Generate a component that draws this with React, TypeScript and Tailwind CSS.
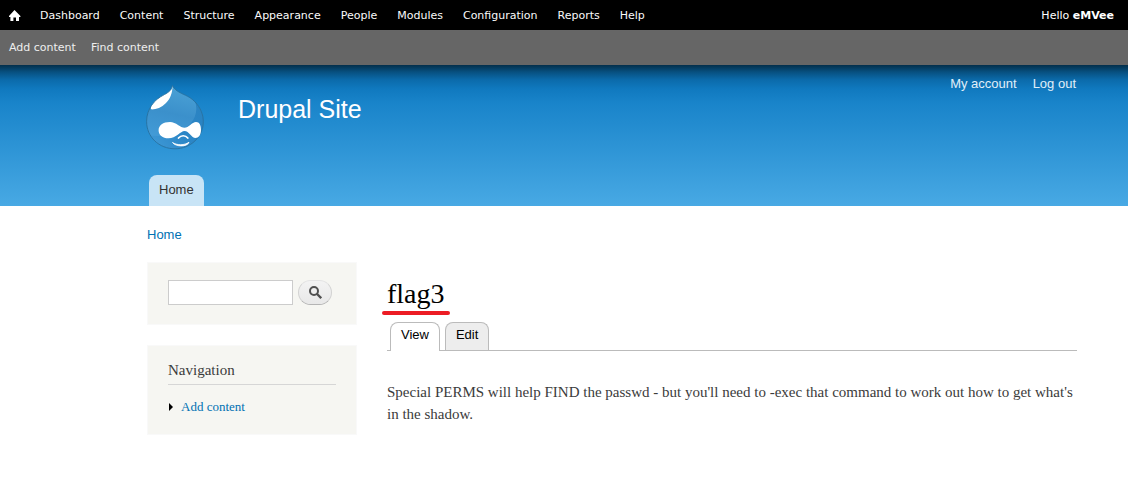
const toolbarLinks = [
  'Dashboard',
  'Content',
  'Structure',
  'Appearance',
  'People',
  'Modules',
  'Configuration',
  'Reports',
  'Help',
];

function HomeIcon() {
  return (
    <svg width="12" height="11" viewBox="0 0 12 11" fill="#fff" aria-hidden="true">
      <path d="M5.5 0 L11.4 6 V7 H10 V11 H7 V7.4 H4.4 V11 H1.4 V7 H0 V6 Z" />
    </svg>
  );
}

function Toolbar() {
  return (
    <nav aria-label="Administration" className="font-['DejaVu_Sans',sans-serif] text-[11px] leading-5 text-white">
      <div className="flex h-[30px] items-center bg-black pt-px pr-[14px] pl-[9px]">
        <a href="#home" aria-label="Home" className="mr-[19px] pb-px">
          <HomeIcon />
        </a>
        <ul className="flex flex-1 gap-5 text-[#fafafa]">
          {toolbarLinks.map((label) => (
            <li key={label}>
              <a href="#admin">{label}</a>
            </li>
          ))}
        </ul>
        <a href="#user">
          Hello <strong>eMVee</strong>
        </a>
      </div>
      <div className="flex h-[35px] items-center gap-[15px] bg-[#666] px-[9px] text-[#eee]">
        <a href="#add">Add content</a>
        <a href="#find">Find content</a>
      </div>
    </nav>
  );
}

const dropOutline =
  'M26.4 0.4 C28 4 31 6.2 35.7 8.5 C41 11 45.5 12.7 50 18 C54 22.5 57.3 29 57.3 36.5 C57.3 52 44.5 63.8 29 63.8 C13 63.8 0.6 52 0.6 36.5 C0.6 30 2.5 25 5.5 20.5 C9 15.2 13 12.5 18.5 9.5 C23 7 25.8 5 26.4 0.4 Z';

function DropLogo() {
  return (
    <svg width="58" height="65" viewBox="0 0 58 65" role="img" aria-label="Drupal logo">
      <defs>
        <linearGradient id="drop" x1="0.6" y1="0" x2="0.4" y2="1">
          <stop offset="0" stopColor="#4ba2d6" />
          <stop offset="0.45" stopColor="#3b90cb" />
          <stop offset="1" stopColor="#459fdb" />
        </linearGradient>
        <linearGradient id="shade" x1="1" y1="0.2" x2="0" y2="0.8">
          <stop offset="0" stopColor="#2a83c2" />
          <stop offset="0.5" stopColor="#2c87c7" />
          <stop offset="1" stopColor="#3f99d6" />
        </linearGradient>
        <clipPath id="outline">
          <path d={dropOutline} />
        </clipPath>
      </defs>
      <g clipPath="url(#outline)">
        <rect width="58" height="65" fill="url(#drop)" />
        <path d="M49 16 C54 31 44 43 31 48 C22 51 12 52 2 50 V65 H58 V16 Z" fill="url(#shade)" />
        <path
          d="M26.6 0 C26.5 8 24.5 13.5 20 18 C15.5 22.5 10.5 24.5 5.8 24.5 C4.3 24 4.5 22 5.5 20 L0 10 L20 0 Z"
          fill="#fff"
        />
      </g>
      <path d={dropOutline} fill="none" stroke="#27719f" strokeWidth="0.9" />
      <path
        d="M24 37 C30 37 34.5 42.8 38.5 42.8 C42.5 42.8 46 37 50 37 C53.5 37 55 40.5 55 45 C55 50 52.5 53 49.5 53 C45.5 53 43 46 38.5 46 C34.5 46 30 53.3 22.5 53.3 C16.5 53.3 12.6 50 12.6 45.2 C12.6 40.5 17 37 24 37 Z"
        fill="#fff"
      />
      <path d="M32.5 53 C35 50 39.5 50 41.8 53" fill="none" stroke="#fff" strokeWidth="1.7" strokeLinecap="round" />
      <path d="M26.5 57.5 C31 60.5 38.5 60.5 43 57.2 C41.5 62.2 29.5 62 26.5 57.5 Z" fill="#fff" stroke="#fff" strokeWidth="0.8" strokeLinejoin="round" />
    </svg>
  );
}

function Header() {
  return (
    <header className="flex h-[141px] flex-col justify-between bg-[linear-gradient(to_bottom,#032f4b_0px,#075080_7px,#0b6bab_15px,#1079bf_24px,#1984ca_38px,#48a9e4_141px)] pr-[51px] pl-[147px] font-['Liberation_Sans',sans-serif]">
      <div className="flex items-start">
        <a href="#front" className="mt-5 -ml-px">
          <DropLogo />
        </a>
        <a href="#front" className="mt-7 ml-[34px] flex-1 text-[25px] leading-8 text-[#fffeff]">
          Drupal Site
        </a>
        <nav aria-label="Account" className="mt-[9px] flex gap-4 pr-px text-[13px] leading-5 text-[#e0eff9]">
          <a href="#account">My account</a>
          <a href="#logout">Log out</a>
        </nav>
      </div>
      <nav aria-label="Main" className="flex pl-0.5">
        <a href="#front" className="h-[31px] rounded-t-lg bg-[#c8e4f6] px-[10px] pt-[5px] text-[13px] leading-5 text-[#333]">
          Home
        </a>
      </nav>
    </header>
  );
}

function Sidebar() {
  return (
    <aside className="flex w-[210px] shrink-0 flex-col gap-5">
      <form role="search" className="flex h-[63px] gap-[5px] border border-[#f9f9f9] bg-[#f6f6f2] px-5 pt-[17px]" onSubmit={(e) => e.preventDefault()}>
        <input
          type="text"
          aria-label="Search"
          className="h-[25px] w-[125px] border border-[#ccc] bg-white px-1 font-['Liberation_Sans',sans-serif] text-[13px]"
        />
        <button
          type="submit"
          aria-label="Search"
          className="flex h-[25px] w-[34px] items-center justify-center rounded-full border border-[#e4e4e4] border-x-[#d2d2d2] border-b-[#b4b4b4] bg-linear-to-b from-[#f3f3f3] to-[#e8e8e8]"
        >
          <svg width="13" height="13" viewBox="0 0 13 13" fill="none" stroke="#505050" aria-hidden="true">
            <circle cx="5" cy="5" r="4" strokeWidth="2" />
            <path d="M7.800 7.800 L12.200 12.200" strokeWidth="2.300" />
          </svg>
        </button>
      </form>
      <section className="h-[90px] border border-[#f9f9f9] bg-[#f6f6f2] px-5 pt-[14px]">
        <h2 className="border-b border-[#d6d6d6] pb-1 text-[15px] leading-5 text-[#3b3b3b]">Navigation</h2>
        <ul className="pt-3 text-[13px] leading-5">
          <li className="flex items-center gap-2 pl-px">
            <svg width="4" height="8" viewBox="0 0 4 8" aria-hidden="true">
              <path d="M0 0 L4 4 L0 8 Z" fill="#000" />
            </svg>
            <a href="#add" className="text-[#0071b3]">
              Add content
            </a>
          </li>
        </ul>
      </section>
    </aside>
  );
}

function Article() {
  return (
    <main className="min-w-0 flex-1 pt-4">
      <div className="relative w-fit">
        <h1 className="text-[28px] leading-8 text-black">flag3</h1>
        <div className="absolute top-[33px] -left-[5px] h-1 w-[68px] rounded-full bg-[#ec1c24]" />
      </div>
      <div className="mt-3 flex items-end gap-[5px] border-b border-[#bbb] pl-[3px] font-['Liberation_Sans',sans-serif] text-[13px] leading-[22px] text-black">
        <a href="#view" className="-mb-px h-[29px] rounded-t-lg border border-b-0 border-[#bbb] bg-white px-[10px] pt-px">
          View
        </a>
        <a href="#edit" className="h-7 rounded-t-lg border border-b-0 border-[#bbb] bg-[#ededed] px-[10px] pt-px">
          Edit
        </a>
      </div>
      <p className="mt-[30px] text-[15px] leading-[22px] text-[#3b3b3b]">
        Special PERMS will help FIND the passwd - but you'll need to -exec that command to work out how to get what's in the shadow.
      </p>
    </main>
  );
}

export default function App() {
  return (
    <div className="min-h-screen bg-white font-['Liberation_Serif',serif]">
      <Toolbar />
      <Header />
      <div className="pr-[51px] pb-10 pl-[147px]">
        <nav aria-label="Breadcrumb" className="pt-[19px] font-['Liberation_Sans',sans-serif] text-[13px] leading-5 text-[#0071b3]">
          <a href="#front">Home</a>
        </nav>
        <div className="mt-[17px] flex items-start gap-[30px]">
          <Sidebar />
          <Article />
        </div>
      </div>
    </div>
  );
}
